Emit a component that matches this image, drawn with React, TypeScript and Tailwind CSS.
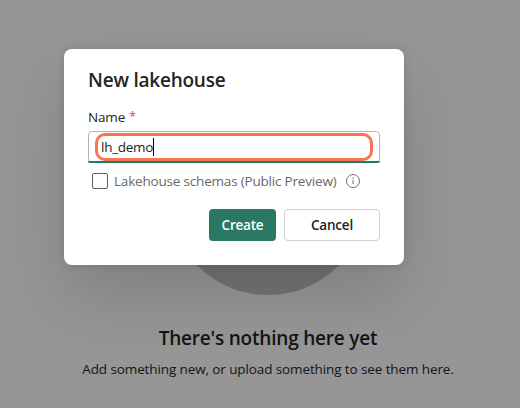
function InfoIcon() {
  return (
    <svg viewBox="0 0 14 14" className="ml-[9.5px] size-3.5 shrink-0" fill="none" stroke="#707070">
      <circle cx="7" cy="7" r="6.5" />
      <path d="M7 6v4" />
      <circle cx="7" cy="4.3" r="0.7" fill="#707070" stroke="none" />
    </svg>
  );
}

function EmptyState() {
  return (
    <section className="flex h-full flex-col items-center pt-[95px] pl-4 text-[#141414]">
      <div className="size-[200px] shrink-0 rounded-full bg-[#747474]" />
      <h2 className="mt-[29px] text-[19px] leading-7 font-semibold tracking-[-0.2px] whitespace-nowrap">
        There's nothing here yet
      </h2>
      <p className="mt-[7px] text-[13.5px] leading-5 tracking-[-0.11px] whitespace-nowrap">
        Add something new, or upload something to see them here.
      </p>
    </section>
  );
}

function NewLakehouseDialog() {
  return (
    <div
      role="dialog"
      className="absolute top-[49px] left-16 flex h-[216px] w-[340px] flex-col rounded-lg bg-white px-6 pt-[17px] text-[#242424] shadow-[0_0_8px_rgba(0,0,0,0.12),0_32px_64px_rgba(0,0,0,0.14)]"
    >
      <h1 className="text-[19px] leading-7 font-semibold tracking-[-0.22px] whitespace-nowrap">New lakehouse</h1>
      <label className="mt-[13px] flex text-[13.5px] leading-5 tracking-[-0.15px]">
        Name <span className="ml-[4px] text-[12px] text-[#c94450]">*</span>
      </label>
      <div className="relative mt-1 flex h-8 items-center rounded border border-[#b3b3b3] px-3">
        <span className="text-[13.5px] leading-5 tracking-[-0.28px]">lh_demo</span>
        <span className="h-[18px] w-px bg-black" />
        <span className="absolute -inset-x-px -bottom-px h-[2px] rounded-b bg-[#217a66]" />
        <span className="absolute top-[1px] right-[6px] left-[6px] h-7 rounded-[10px] border-3 border-[#f9754f]" />
      </div>
      <div className="mt-2 flex h-5 items-center pl-1 text-[#686868]">
        <span className="size-4 rounded-[2px] border border-[#616161]" />
        <span className="ml-1.5 text-[13.5px] leading-5 tracking-[-0.19px] whitespace-nowrap">
          Lakehouse schemas (Public Preview)
        </span>
        <InfoIcon />
      </div>
      <div className="mt-[18px] flex justify-end gap-2 text-[13.5px] leading-5 font-semibold tracking-[-0.2px]">
        <button className="h-8 w-[67px] rounded bg-[#2a7864] text-white">Create</button>
        <button className="h-8 w-24 rounded border border-[#d1d1d1] bg-white">Cancel</button>
      </div>
    </div>
  );
}

export default function App() {
  return (
    <main className="relative h-[408px] w-[520px] overflow-hidden bg-[#969696] font-['Open_Sans','Noto_Sans',sans-serif]">
      <EmptyState />
      <NewLakehouseDialog />
    </main>
  );
}
